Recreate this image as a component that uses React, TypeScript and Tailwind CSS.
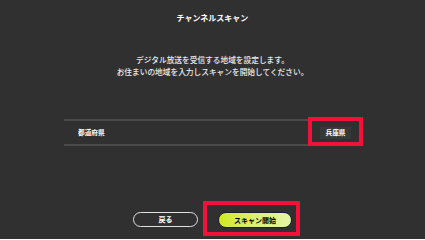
export default function App() {
  return (
    <div
      className="relative flex h-[239px] w-[425px] flex-col items-center overflow-hidden bg-[#303030] text-white"
      style={{ fontFamily: '"Noto Sans CJK JP", "Noto Sans", sans-serif' }}
    >
      <h1 className="mt-[12px] text-[8px] font-bold leading-[12px]">チャンネルスキャン</h1>

      <div className="mt-[30px] text-center text-[7.7px] font-medium leading-[12px] text-[#ececec]">
        <p>デジタル放送を受信する地域を設定します。</p>
        <p>お住まいの地域を入力しスキャンを開始してください。</p>
      </div>

      <div className="relative mt-[41px] flex h-[27px] w-[297px] items-center justify-between border-y-2 border-[#4a4a4a] pl-[14px] pr-[10px]">
        <span className="text-[6.7px] font-bold">都道府県</span>
        <span className="flex h-[12px] w-[31px] items-center justify-center bg-[#383838] text-[6.7px] font-bold">
          兵庫県
        </span>
        <div className="absolute left-[244px] top-[-4px] h-[29px] w-[55px] border-4 border-[#f5103a]" />
      </div>

      <div className="mt-[66px] flex gap-[20px]">
        <button className="flex h-[15px] w-[65px] items-center justify-center rounded-full border-[1.5px] border-[#e0e0e0] text-[7px] font-bold text-white">
          戻る
        </button>
        <div className="relative">
          <button className="flex h-[16px] w-[74px] items-center justify-center rounded-full border border-[#1c1c3a] bg-gradient-to-r from-[#d2ea0a] to-[#e4f5a6] text-[7px] font-bold text-black">
            スキャン開始
          </button>
          <div className="absolute left-[-15px] top-[-11px] h-[35px] w-[97px] border-4 border-[#f5103a]" />
        </div>
      </div>
    </div>
  );
}
